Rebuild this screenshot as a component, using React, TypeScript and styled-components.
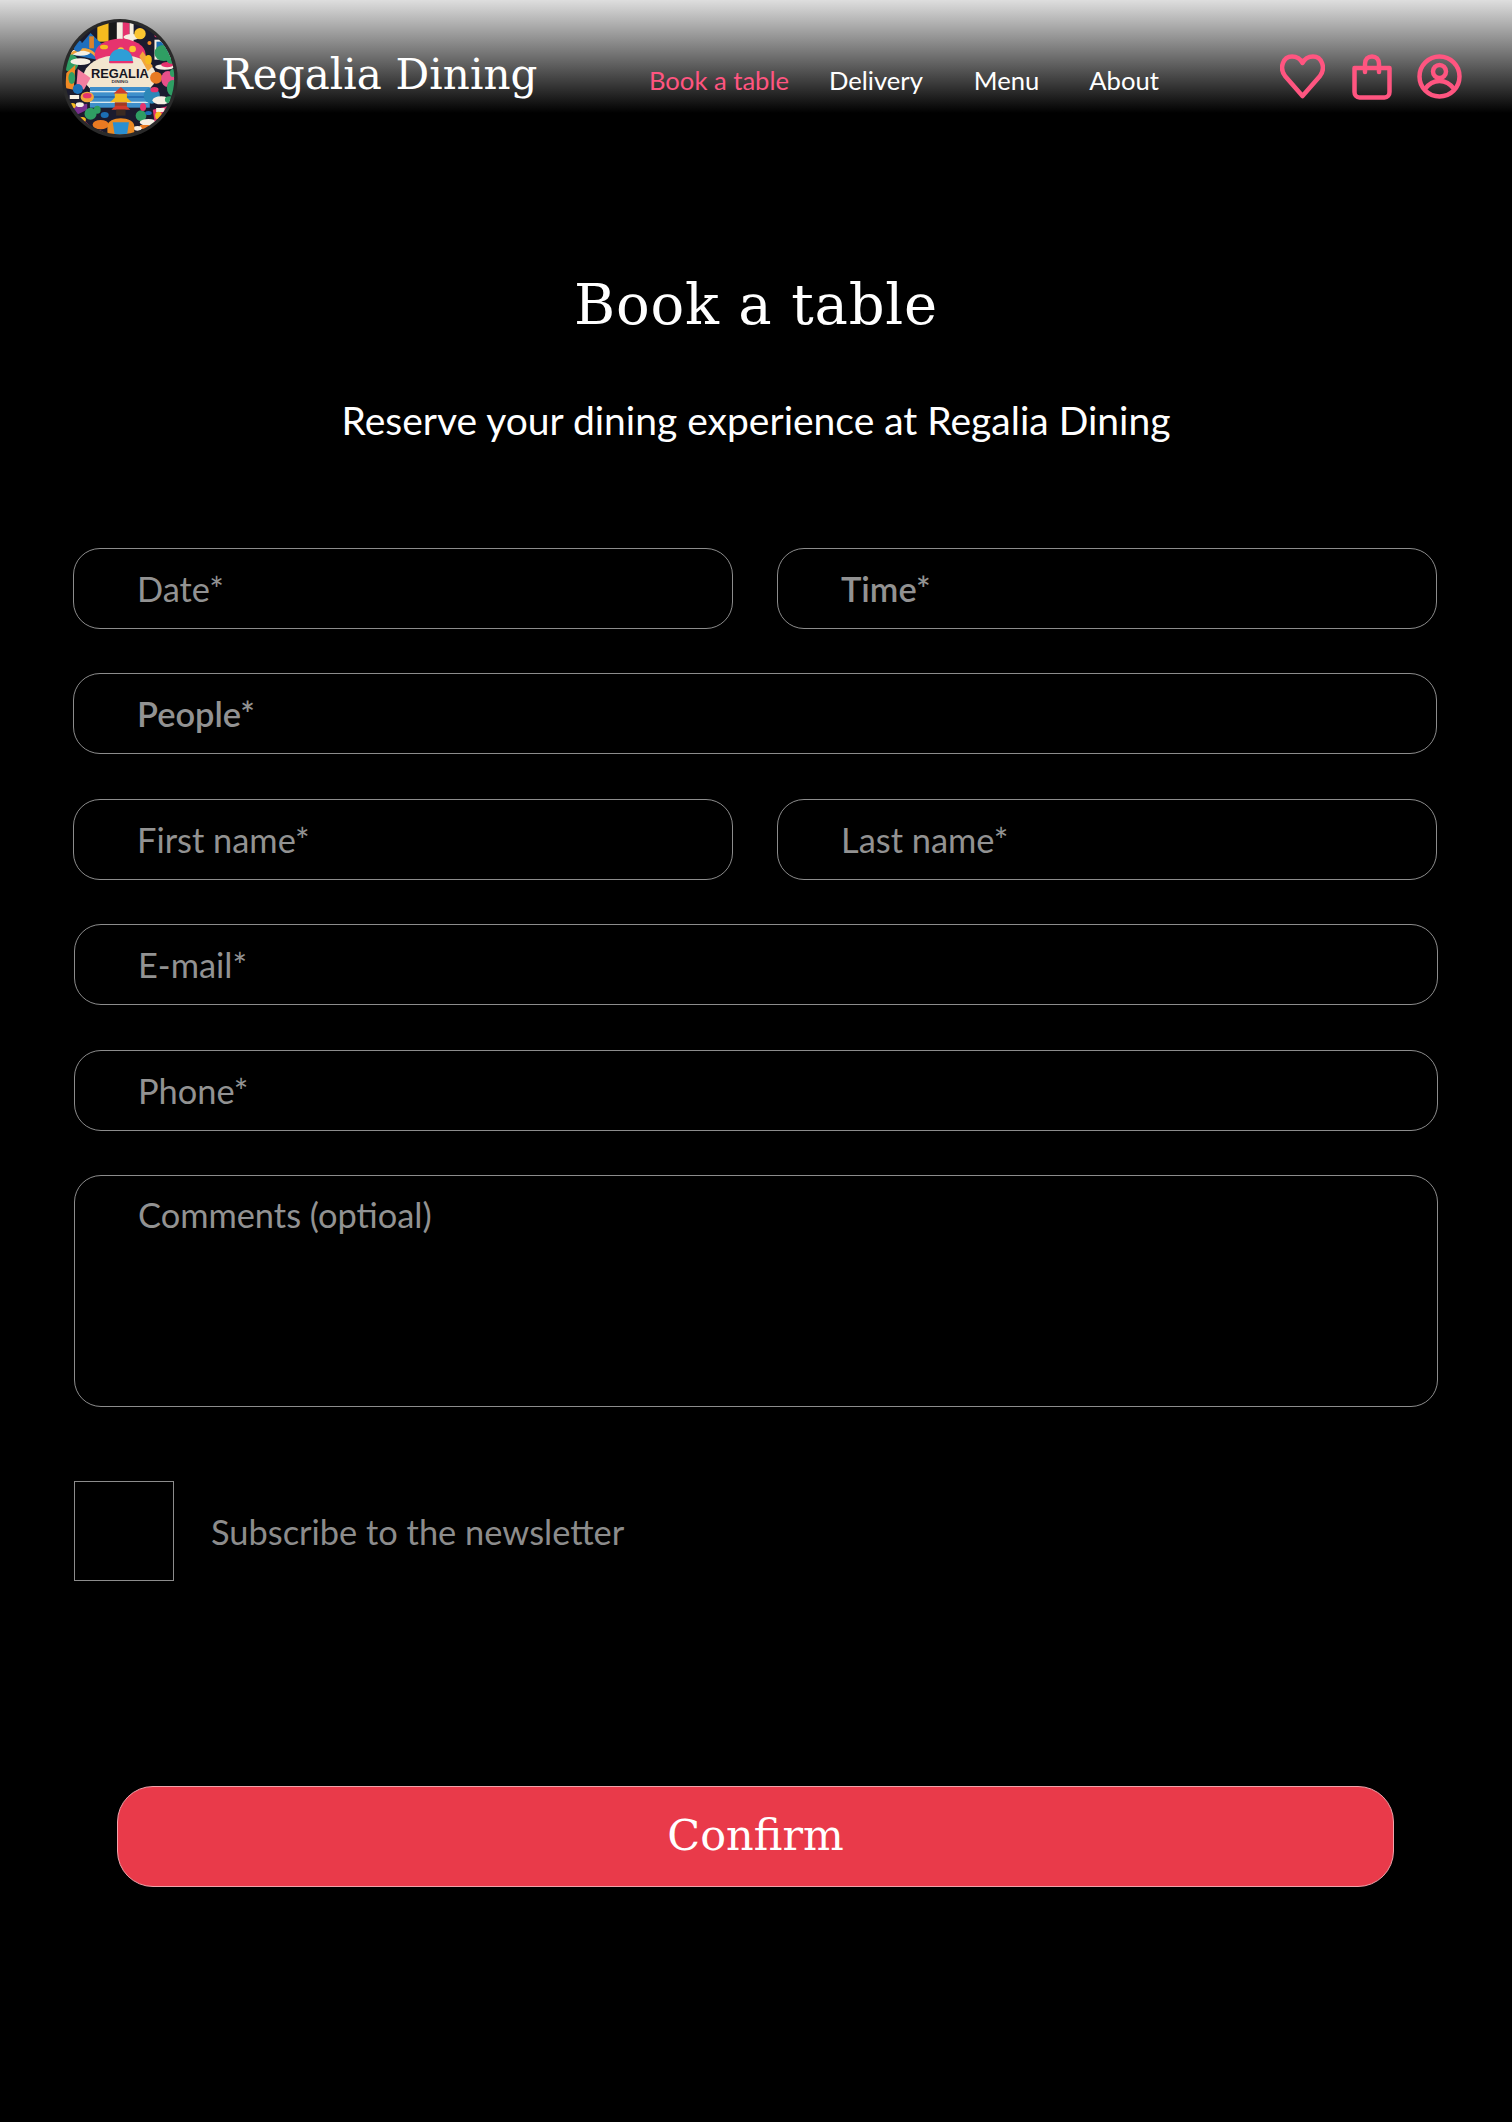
import styled, { createGlobalStyle } from "styled-components";

const PINK = "#ff5580";
const SLAB = `"DejaVu Serif", serif`;

const GlobalStyle = createGlobalStyle`
    html, body {
        margin: 0;
        background: #000;
    }
    body {
        font-family: Lato, "Liberation Sans", sans-serif;
    }
`;

const Page = styled.div`
    width: 1512px;
    height: 2122px;
    overflow: hidden;
    background: #000;
`;

/* ------------------ header ------------------ */
const Header = styled.header`
    display: flex;
    align-items: flex-start;
    height: 160px;
    box-sizing: border-box;
    padding: 19px 0 0 62px;
    background: linear-gradient(#dedede 0, #000 113px) no-repeat;
`;
const LogoMark = styled.svg`
    flex: none;
    width: 116px;
    height: 119px;
`;
const Brand = styled.div`
    margin: 28px 0 0 43px;
    width: 320px;
    font-family: ${SLAB};
    font-size: 42px;
    line-height: 56px;
    letter-spacing: 0.1px;
    color: #fff;
    white-space: nowrap;
`;
const Nav = styled.nav`
    display: flex;
    margin: 44px 0 0 108px;
`;
const NavLink = styled.a<{ $left?: number; $active?: boolean }>`
    margin-left: ${(p) => p.$left ?? 0}px;
    font-size: 25.6px;
    line-height: 34px;
    color: ${(p) => (p.$active ? PINK : "#fff")};
    white-space: nowrap;
`;
const Icons = styled.div`
    display: flex;
    align-items: flex-start;
    margin: 35px 0 0 121px;
`;
const IconSvg = styled.svg<{ $left?: number }>`
    flex: none;
    margin-left: ${(p) => p.$left ?? 0}px;
    fill: none;
    stroke: ${PINK};
    stroke-width: 4.5;
    stroke-linecap: round;
    stroke-linejoin: round;
`;

/* ------------------ intro ------------------ */
const Intro = styled.section`
    display: flex;
    flex-direction: column;
    align-items: center;
    padding-top: 107px;
`;
const Title = styled.h1`
    margin: 0;
    font-family: ${SLAB};
    font-weight: 400;
    font-size: 56px;
    line-height: 76px;
    letter-spacing: 0.8px;
    color: #fff;
`;
const Subtitle = styled.p`
    margin: 52px 0 0;
    font-size: 39px;
    line-height: 50px;
    color: #fff;
`;

/* ------------------ form ------------------ */
const Form = styled.form`
    display: flex;
    flex-direction: column;
    gap: 44.4px;
    width: 1364px;
    margin: 103px 0 0 73px;
`;
const Row = styled.div`
    display: grid;
    grid-template-columns: 1fr 1fr;
    gap: 44px;
`;
const Field = styled.div<{ $shift?: boolean }>`
    display: flex;
    align-items: center;
    height: 81px;
    box-sizing: border-box;
    padding: 0 0 0 63px;
    margin-left: ${(p) => (p.$shift ? 1 : 0)}px;
    margin-right: ${(p) => (p.$shift ? -1 : 0)}px;
    border: 1px solid #8c8c8c;
    border-radius: 27px;
`;
const FieldText = styled.span<{ $bold?: boolean }>`
    font-size: 34.4px;
    font-weight: ${(p) => (p.$bold ? 600 : 400)};
    color: #929292;
`;
const CommentBox = styled.div`
    height: 232px;
    box-sizing: border-box;
    margin: 0 -1px 0 1px;
    padding: 18px 0 0 63px;
    border: 1px solid #8c8c8c;
    border-radius: 27px;
`;
const Newsletter = styled.div`
    display: flex;
    align-items: center;
    gap: 37px;
    margin: 30px 0 0 1px;
`;
const CheckSquare = styled.div`
    flex: none;
    width: 100px;
    height: 100px;
    box-sizing: border-box;
    border: 1px solid #8c8c8c;
`;
const NewsletterText = styled.span`
    font-size: 34.4px;
    color: #8c8c8c;
`;
const ConfirmButton = styled.button`
    display: block;
    width: 1277px;
    height: 101px;
    margin: 205px 0 0 117px;
    padding: 0 0 4px;
    border: 1px solid #f1a2aa;
    border-radius: 36px;
    background: #e93a4a;
    font-family: ${SLAB};
    font-size: 43px;
    color: #fff;
`;

// small coloured bits scattered around the badge: cx, cy, rx, ry, fill
const logoBits: [number, number, number, number, string][] = [
    [112, 108, 14, 18, "#1f6fbd"],
    [190, 112, 12, 7, "#f5bb1f"],
    [325, 100, 6, 6, "#f08a24"],
    [345, 78, 5, 5, "#e6336e"],
    [322, 150, 10, 14, "#f5bb1f"],
    [390, 150, 14, 12, "#2f9e63"],
    [395, 190, 9, 12, "#2f9e63"],
    [340, 240, 12, 8, "#e6336e"],
    [385, 270, 14, 10, "#2f9e63"],
    [94, 205, 10, 18, "#2f9e63"],
    [96, 288, 10, 8, "#f5bb1f"],
    [118, 285, 12, 7, "#f6efe2"],
    [170, 300, 10, 12, "#2f9e63"],
    [192, 316, 12, 9, "#1c6fb5"],
    [125, 330, 11, 8, "#f5bb1f"],
    [172, 370, 16, 8, "#f47fa0"],
    [290, 356, 12, 7, "#f6efe2"],
    [318, 372, 16, 7, "#f2a53a"],
    [352, 318, 10, 12, "#f5bb1f"],
    [306, 292, 9, 12, "#e6336e"],
    [322, 310, 10, 6, "#1c6fb5"],
];

function Logo() {
    // rough redraw of the round badge, coordinates follow the reference crop
    return (
        <LogoMark viewBox="65 28 345 357" preserveAspectRatio="none">
            <defs>
                <clipPath id="badge">
                    <ellipse cx="237" cy="206" rx="162" ry="168" />
                </clipPath>
            </defs>
            <ellipse cx="237" cy="206" rx="172" ry="178" fill="#2a2a2a" />
            <g clipPath="url(#badge)">
                <rect x="60" y="30" width="360" height="360" fill="#1b1b2e" />
                <rect x="170" y="36" width="34" height="60" fill="#f5bb1f" />
                <rect x="204" y="36" width="24" height="60" fill="#191919" />
                <rect x="228" y="36" width="18" height="60" fill="#f6efe2" />
                <rect x="246" y="36" width="20" height="60" fill="#e6336e" />
                <rect x="266" y="36" width="12" height="60" fill="#f6efe2" />
                <ellipse cx="272" cy="82" rx="24" ry="9" fill="#f6efe2" />
                <circle cx="297" cy="72" r="17" fill="#fbc531" />
                <rect x="340" y="90" width="50" height="60" fill="#f6efe2" />
                <rect x="346" y="96" width="36" height="44" fill="#1c6fb5" />
                <path d="M95 135 L150 70 L190 110 L170 150 Z" fill="#1f6fbd" />
                <rect x="146" y="80" width="14" height="36" fill="#d9822b" />
                <ellipse cx="368" cy="130" rx="28" ry="24" fill="#2f9e63" />
                <ellipse cx="120" cy="128" rx="30" ry="10" fill="#f6efe2" />
                <path d="M88 136 C120 112 150 112 176 150" stroke="#f2a53a" strokeWidth="8" fill="none" />
                <ellipse cx="238" cy="135" rx="76" ry="48" fill="#e6336e" />
                <ellipse cx="237" cy="200" rx="108" ry="64" fill="#f3e6cf" />
                <ellipse cx="240" cy="124" rx="10" ry="11" fill="#fbc531" />
                <path d="M205 158 C205 125 225 118 240 118 C258 118 276 128 276 158 Z" fill="#2e9ed6" />
                <rect x="205" y="154" width="72" height="7" rx="3" fill="#e6336e" />
                <circle cx="275" cy="118" r="10" fill="#fbc531" />
                <path d="M305 125 L335 170 L320 185 L295 140 Z" fill="#f2a53a" />
                <ellipse cx="370" cy="172" rx="28" ry="8" fill="#f6efe2" />
                <ellipse cx="378" cy="165" rx="18" ry="8" fill="#e6336e" />
                <ellipse cx="90" cy="160" rx="24" ry="26" fill="#2f9e63" />
                <ellipse cx="120" cy="156" rx="30" ry="10" fill="#f6efe2" />
                <path d="M78 190 L105 165 L100 240 L74 235 Z" fill="#f08a24" />
                <path d="M112 178 L150 205 L130 240 L108 225 Z" fill="#f47fa0" />
                <circle cx="345" cy="204" r="18" fill="#e87a22" />
                <ellipse cx="380" cy="208" rx="20" ry="24" fill="#e84f8a" />
                <ellipse cx="395" cy="235" rx="18" ry="24" fill="#2f9e63" />
                <rect x="148" y="232" width="178" height="62" fill="#3f8fcb" />
                <rect x="148" y="244" width="178" height="4" fill="#dbe9ef" />
                <rect x="148" y="260" width="178" height="4" fill="#1c5fa8" />
                <rect x="148" y="276" width="178" height="4" fill="#dbe9ef" />
                <circle cx="332" cy="258" r="24" fill="#2b87b8" />
                <ellipse cx="360" cy="272" rx="26" ry="12" fill="#f6efe2" />
                <circle cx="112" cy="238" r="15" fill="#1c6fb5" />
                <ellipse cx="140" cy="262" rx="20" ry="16" fill="#f2a53a" />
                <ellipse cx="140" cy="258" rx="13" ry="8" fill="#e6336e" />
                <rect x="88" y="256" width="28" height="12" fill="#f6efe2" />
                <path d="M95 290 L140 282 L140 300 L100 320 Z" fill="#7a2f8f" />
                <circle cx="150" cy="312" r="18" fill="#2f9e63" />
                <path d="M118 320 L150 350 L130 368 L100 330 Z" fill="#e6336e" />
                <ellipse cx="180" cy="345" rx="24" ry="14" fill="#e87a22" />
                <circle cx="300" cy="318" r="16" fill="#2f9e63" />
                <ellipse cx="322" cy="338" rx="26" ry="10" fill="#f6efe2" />
                <rect x="296" y="346" width="50" height="12" rx="4" fill="#e87a22" />
                <path d="M335 300 L378 290 L365 345 L340 335 Z" fill="#e6336e" />
                <rect x="345" y="295" width="25" height="12" fill="#f6efe2" />
                {logoBits.map(([cx, cy, rx, ry, fill]) => (
                    <ellipse key={`${cx}-${cy}`} cx={cx} cy={cy} rx={rx} ry={ry} fill={fill} />
                ))}
                <path d="M240 232 L262 252 L218 252 Z" fill="#d13b2c" />
                <rect x="222" y="252" width="36" height="14" fill="#f5bb1f" />
                <path d="M208 278 L272 278 L258 264 L222 264 Z" fill="#f5bb1f" />
                <rect x="222" y="278" width="36" height="12" fill="#a03a22" />
                <path d="M212 300 L268 300 L256 288 L224 288 Z" fill="#d13b2c" />
                <rect x="226" y="300" width="28" height="18" fill="#3a2a22" />
                <path d="M200 385 L200 350 C200 318 280 318 280 350 L280 385 Z" fill="#ea8a23" />
                <path d="M216 338 L264 338 L258 378 L222 378 Z" fill="#2a8fd0" />
                <text x="237" y="204" textAnchor="middle" textLength="172" lengthAdjust="spacingAndGlyphs"
                    fontFamily="Liberation Sans, sans-serif" fontWeight="700" fontSize="38" fill="#15151f">REGALIA</text>
                <text x="237" y="221" textAnchor="middle" textLength="50" lengthAdjust="spacingAndGlyphs"
                    fontFamily="Liberation Sans, sans-serif" fontWeight="700" fontSize="12" fill="#33333d">DINING</text>
            </g>
        </LogoMark>
    );
}

function App() {
    return (
        <Page>
            <GlobalStyle />
            <Header>
                <Logo />
                <Brand>Regalia Dining</Brand>
                <Nav>
                    <NavLink $active>Book a table</NavLink>
                    <NavLink $left={40}>Delivery</NavLink>
                    <NavLink $left={51}>Menu</NavLink>
                    <NavLink $left={50}>About</NavLink>
                </Nav>
                <Icons>
                    <IconSvg width="45" height="45" viewBox="0 0 45 45">
                        <path d="M22.5 42 L5 22 C-1 14 3 2.500 12 2.500 C17 2.500 20.500 5 22.500 9 C24.500 5 28 2.500 33 2.500 C42 2.500 46 14 40 22 Z" />
                    </IconSvg>
                    <IconSvg $left={27} width="40" height="46" viewBox="0 0 40 46">
                        <path d="M2.500 14 H37.500 V38 C37.500 41 35.500 43.500 32.500 43.500 H7.500 C4.500 43.500 2.500 41 2.500 38 Z" />
                        <path d="M13 18 V10 C13 5 16 2.500 20 2.500 C24 2.500 27 5 27 10 V18" />
                    </IconSvg>
                    <IconSvg $left={25} width="45" height="45" viewBox="0 0 45 45">
                        <circle cx="22.500" cy="22.500" r="20" />
                        <circle cx="22.500" cy="17.500" r="6.500" />
                        <path d="M8 35 C12 29.500 17 27 22.500 27 C28 27 33 29.500 37 35" />
                    </IconSvg>
                </Icons>
            </Header>

            <Intro>
                <Title>Book a table</Title>
                <Subtitle>Reserve your dining experience at Regalia Dining</Subtitle>
            </Intro>

            <Form>
                <Row>
                    <Field><FieldText>Date*</FieldText></Field>
                    <Field><FieldText $bold>Time*</FieldText></Field>
                </Row>
                <Field><FieldText $bold>People*</FieldText></Field>
                <Row>
                    <Field><FieldText>First name*</FieldText></Field>
                    <Field><FieldText>Last name*</FieldText></Field>
                </Row>
                <Field $shift><FieldText>E-mail*</FieldText></Field>
                <Field $shift><FieldText>Phone*</FieldText></Field>
                <CommentBox><FieldText>Comments (optioal)</FieldText></CommentBox>
                <Newsletter>
                    <CheckSquare />
                    <NewsletterText>Subscribe to the newsletter</NewsletterText>
                </Newsletter>
            </Form>
            <ConfirmButton type="button">Confirm</ConfirmButton>
        </Page>
    );
}

export default App;
